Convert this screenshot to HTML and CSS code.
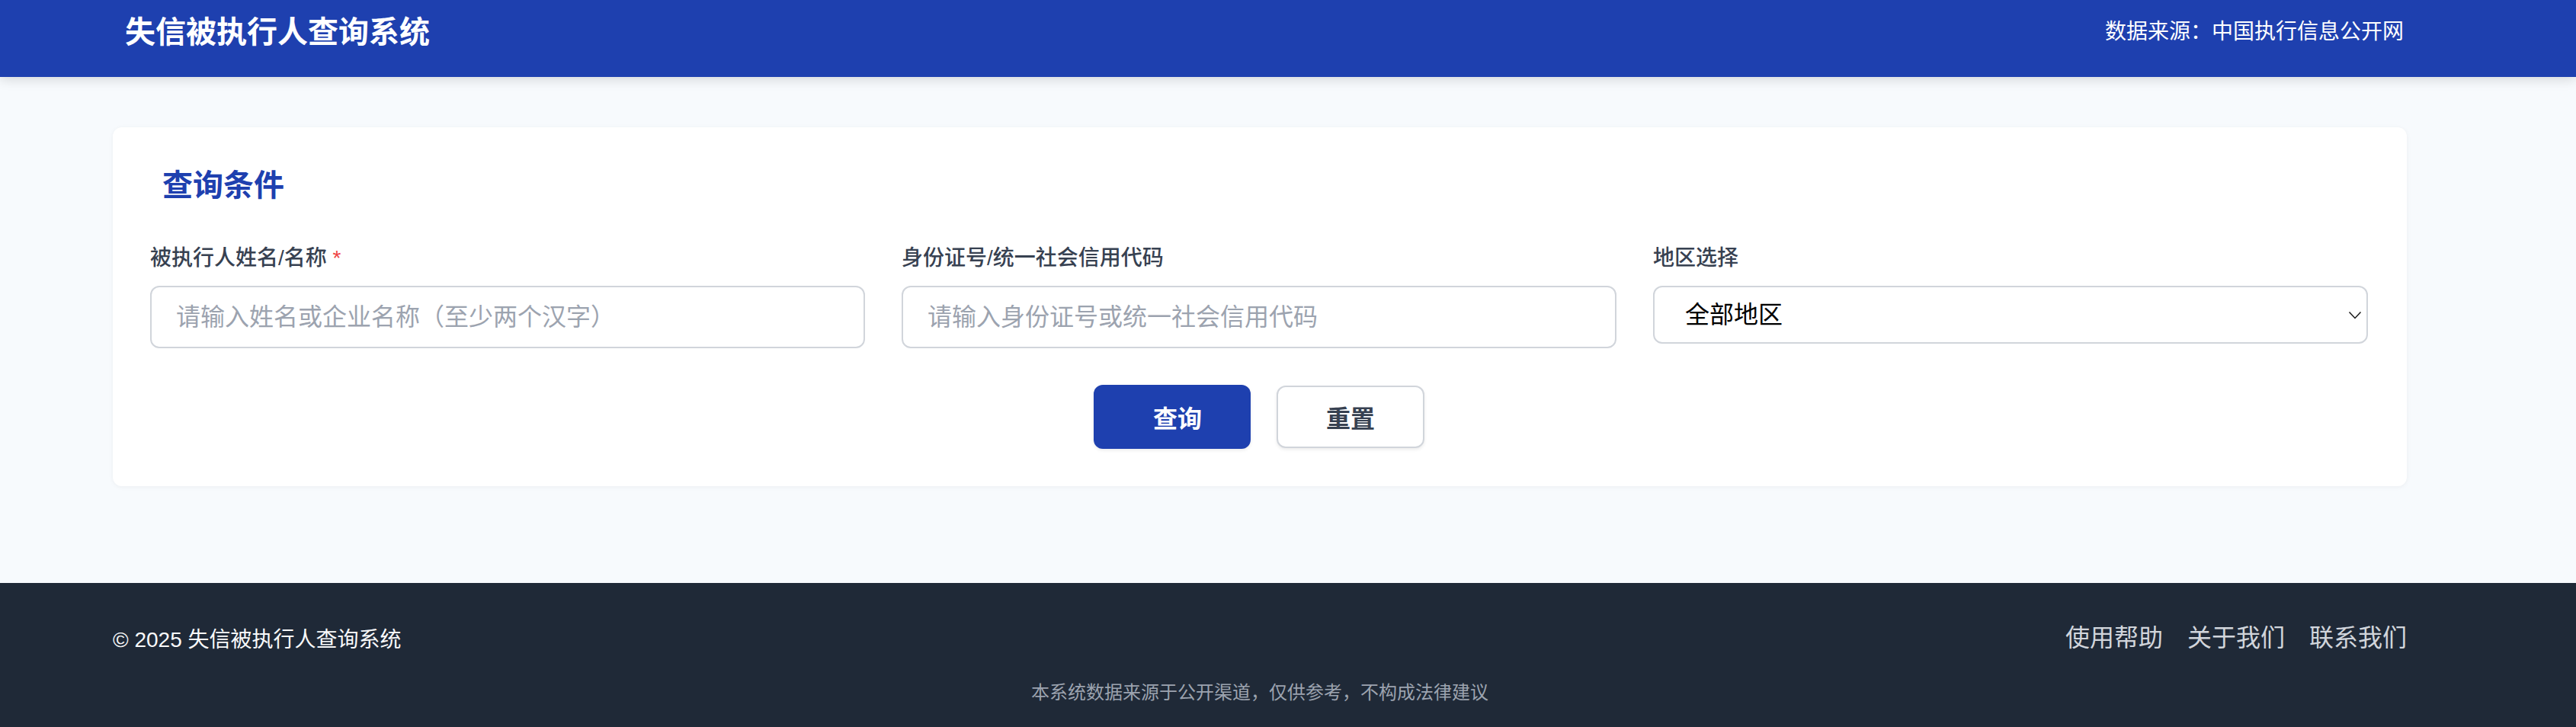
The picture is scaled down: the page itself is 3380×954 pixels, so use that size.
FILE: index.html
```html
<!DOCTYPE html>
<html lang="zh-CN">
<head>
<meta charset="utf-8">
<title>失信被执行人查询系统</title>
<link rel="stylesheet" href="styles.css">
</head>
<body>
<header class="site-header">
  <div class="header-inner">
    <h1 class="site-title">失信被执行人查询系统</h1>
    <div class="source">数据来源：中国执行信息公开网</div>
  </div>
</header>
<main class="main">
  <section class="card">
    <h2 class="card-title">查询条件</h2>
    <div class="fields">
      <div class="field">
        <label class="field-label">被执行人姓名/名称 <span class="required">*</span></label>
        <input class="text-input" type="text" placeholder="请输入姓名或企业名称（至少两个汉字）">
      </div>
      <div class="field">
        <label class="field-label">身份证号/统一社会信用代码</label>
        <input class="text-input" type="text" placeholder="请输入身份证号或统一社会信用代码">
      </div>
      <div class="field">
        <label class="field-label">地区选择</label>
        <div class="select-wrap">
          <select class="select-input">
            <option>全部地区</option>
          </select>
          <svg class="chevron" width="18" height="11" viewBox="0 0 18 11"><path d="M1.5 1.5 L9 9.5 L16.5 1.5" fill="none" stroke="#1a1a1a" stroke-width="1.5"/></svg>
        </div>
      </div>
    </div>
    <div class="actions">
      <button class="btn btn-primary" type="button">查询</button>
      <button class="btn btn-secondary" type="button">重置</button>
    </div>
  </section>
</main>
<footer class="site-footer">
  <div class="footer-inner">
    <div class="footer-row">
      <div class="copyright">© 2025 失信被执行人查询系统</div>
      <nav class="footer-links">
        <a class="footer-link">使用帮助</a>
        <a class="footer-link">关于我们</a>
        <a class="footer-link">联系我们</a>
      </nav>
    </div>
    <p class="disclaimer">本系统数据来源于公开渠道，仅供参考，不构成法律建议</p>
  </div>
</footer>
</body>
</html>
```
FILE: styles.css
```css
* { box-sizing: border-box; }

body {
  margin: 0;
  background: #f7fafd;
  font-family: "Liberation Sans", "Noto Sans CJK SC", sans-serif;
  color: #111827;
}

.site-header {
  position: relative;
  z-index: 1;
  height: 101px;
  background: #1e40af;
  box-shadow: 0 4px 14px rgba(0, 0, 0, 0.13);
}

.header-inner {
  width: 3010px;
  margin-left: 148px;
  height: 84px;
  padding: 0 4px 0 16px;
  display: flex;
  align-items: center;
  justify-content: space-between;
}

.site-title {
  margin: 0;
  font-size: 40px;
  line-height: 56px;
  font-weight: 700;
  color: #ffffff;
}

.source {
  font-size: 28px;
  line-height: 40px;
  color: #ffffff;
}

.main {
  padding: 66px 0 127px;
}

.card {
  width: 3010px;
  margin-left: 148px;
  background: #ffffff;
  border-radius: 12px;
  padding: 48px 51px 49px 49px;
  box-shadow: 0 1px 6px rgba(0, 0, 0, 0.05);
}

.card-title {
  margin: 0 0 48px 16px;
  font-size: 40px;
  line-height: 56px;
  font-weight: 700;
  color: #1e40af;
}

.fields {
  display: grid;
  grid-template-columns: repeat(3, 1fr);
  column-gap: 48px;
}

.field-label {
  display: block;
  font-size: 28px;
  line-height: 40px;
  font-weight: 500;
  color: #374151;
  margin-bottom: 16px;
}

.required {
  color: #ef4444;
}

.text-input {
  display: block;
  width: 100%;
  height: 82px;
  border: 2px solid #d1d5db;
  border-radius: 12px;
  padding: 0 32px;
  font-family: inherit;
  font-size: 32px;
  color: #111827;
  background: #ffffff;
  outline: none;
}

.text-input::placeholder {
  color: #9ca3af;
}

.select-wrap {
  position: relative;
}

.select-input {
  display: block;
  width: 100%;
  height: 76px;
  border: 2px solid #d1d5db;
  border-radius: 12px;
  padding: 0 40px 0 40px;
  font-family: inherit;
  font-size: 32px;
  color: #000000;
  background: #ffffff;
  appearance: none;
  -webkit-appearance: none;
  outline: none;
}

.chevron {
  position: absolute;
  right: 8px;
  top: 33px;
  pointer-events: none;
}

.actions {
  display: flex;
  justify-content: center;
  align-items: center;
  gap: 34px;
  margin-top: 48px;
}

.btn {
  font-family: inherit;
  font-size: 32px;
  font-weight: 700;
  border-radius: 12px;
  cursor: pointer;
}

.btn-primary {
  height: 84px;
  padding: 0 64px 0 78px;
  border: none;
  background: #1e40af;
  color: #ffffff;
  box-shadow: 0 2px 4px rgba(0, 0, 0, 0.08);
}

.btn-secondary {
  height: 82px;
  padding: 0 63px;
  border: 2px solid #d1d5db;
  background: #ffffff;
  color: #374151;
  box-shadow: 0 2px 4px rgba(0, 0, 0, 0.08);
}

.site-footer {
  background: #1f2937;
  padding: 48px 0 48px;
}

.footer-inner {
  width: 3010px;
  margin-left: 148px;
}

.footer-row {
  display: flex;
  justify-content: space-between;
  align-items: center;
  height: 48px;
}

.copyright {
  font-size: 28px;
  color: #f9fafb;
}

.footer-links {
  display: flex;
  gap: 32px;
}

.footer-link {
  font-size: 32px;
  line-height: 48px;
  color: #d1d5db;
}

.disclaimer {
  margin: 32px 0 0;
  text-align: center;
  font-size: 24px;
  line-height: 32px;
  color: #9ca3af;
}
```
